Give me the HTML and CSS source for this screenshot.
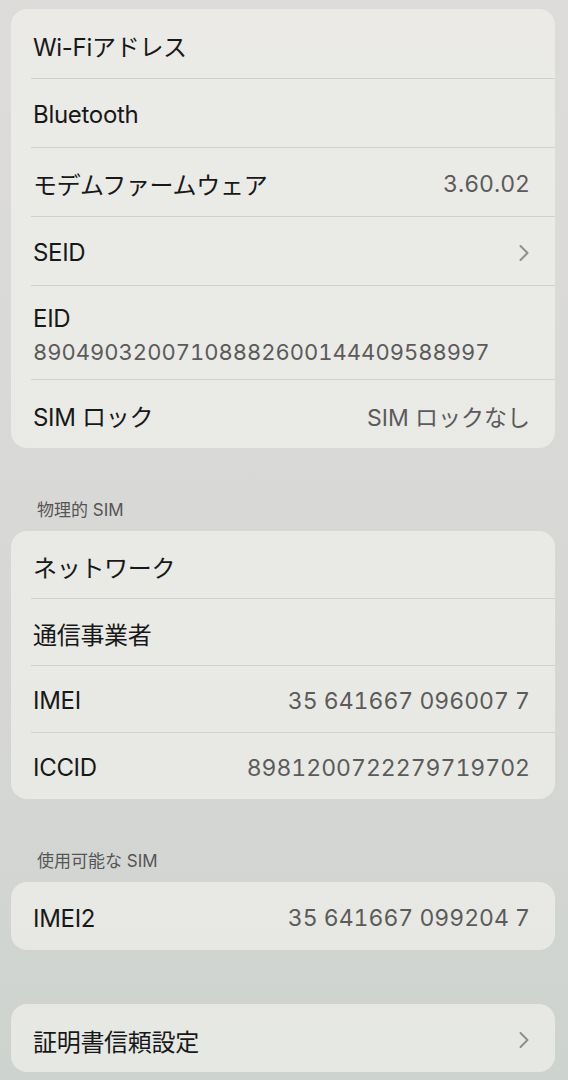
FILE: index.html
```html
<!DOCTYPE html>
<html lang="ja">
<head>
  <meta charset="UTF-8" />
  <meta name="viewport" content="width=device-width, initial-scale=1.0"/>
  <title>情報</title>
  <link rel="stylesheet" href="styles.css">
</head>
<body>

  <div class="page">
    <div class="group group-tall">
      <div class="row">
        <span class="label">Wi-Fiアドレス</span>
      </div>
      <div class="row">
        <span class="label">Bluetooth</span>
      </div>
      <div class="row">
        <span class="label">モデムファームウェア</span>
        <span class="value">3.60.02</span>
      </div>
      <div class="row">
        <span class="label">SEID</span>
        <svg class="chevron" viewBox="0 0 12 18" width="12" height="18">
          <path d="M2.5 2 L9.5 9 L2.5 16" fill="none" stroke="currentColor" stroke-width="2" stroke-linecap="round" stroke-linejoin="round"/>
        </svg>
      </div>
      <div class="row row-stack">
        <span class="label">EID</span>
        <span class="sub">89049032007108882600144409588997</span>
      </div>
      <div class="row">
        <span class="label">SIM ロック</span>
        <span class="value">SIM ロックなし</span>
      </div>
    </div>

    <p class="section-title">物理的 SIM</p>
    <div class="group">
      <div class="row">
        <span class="label">ネットワーク</span>
      </div>
      <div class="row">
        <span class="label">通信事業者</span>
      </div>
      <div class="row">
        <span class="label">IMEI</span>
        <span class="value">35 641667 096007 7</span>
      </div>
      <div class="row">
        <span class="label">ICCID</span>
        <span class="value">8981200722279719702</span>
      </div>
    </div>

    <p class="section-title">使用可能な SIM</p>
    <div class="group">
      <div class="row row-single">
        <span class="label">IMEI2</span>
        <span class="value">35 641667 099204 7</span>
      </div>
    </div>

    <div class="group group-last">
      <div class="row row-single">
        <span class="label">証明書信頼設定</span>
        <svg class="chevron" viewBox="0 0 12 18" width="12" height="18">
          <path d="M2.5 2 L9.5 9 L2.5 16" fill="none" stroke="currentColor" stroke-width="2" stroke-linecap="round" stroke-linejoin="round"/>
        </svg>
      </div>
    </div>
  </div>

</body>
</html>
```

FILE: styles.css
```css
body {
  margin: 0;
  font-family: Inter, "Noto Sans CJK JP", sans-serif;
  background: linear-gradient(to bottom, #dddcda 0%, #d8d8d6 45%, #d4d6d3 75%, #cdd3ce 100%);
  color: #181818;
  min-height: 1080px;
}

.page {
  padding: 9px 13px 10px 11px;
}

.group {
  background: rgba(240, 240, 236, 0.72);
  border-radius: 16px;
  overflow: hidden;
}

.row {
  display: flex;
  align-items: center;
  justify-content: space-between;
  box-sizing: border-box;
  min-height: 67px;
  padding: 4px 25px 0 22px;
  position: relative;
}

.row-single {
  min-height: 68px;
}

.group-tall .row {
  min-height: 69px;
}

.group-tall .row-stack {
  min-height: 94px;
}

.row + .row::before {
  content: "";
  position: absolute;
  top: 0;
  left: 20px;
  right: 0;
  border-top: 1px solid #d0d0cc;
}

.row-stack {
  flex-direction: column;
  align-items: flex-start;
  justify-content: center;
  gap: 6px;
}

.label {
  font-size: 24px;
  letter-spacing: -0.3px;
}

.value,
.sub {
  color: #5b5b5b;
  font-variant-numeric: tabular-nums;
}

.value {
  font-size: 23px;
}

.sub {
  font-size: 22px;
}

.chevron {
  color: #8e8e8e;
}

.section-title {
  margin: 53px 0 12px 26px;
  font-size: 17px;
  color: #555;
  line-height: 18px;
}

.group-last {
  margin-top: 54px;
}
```
